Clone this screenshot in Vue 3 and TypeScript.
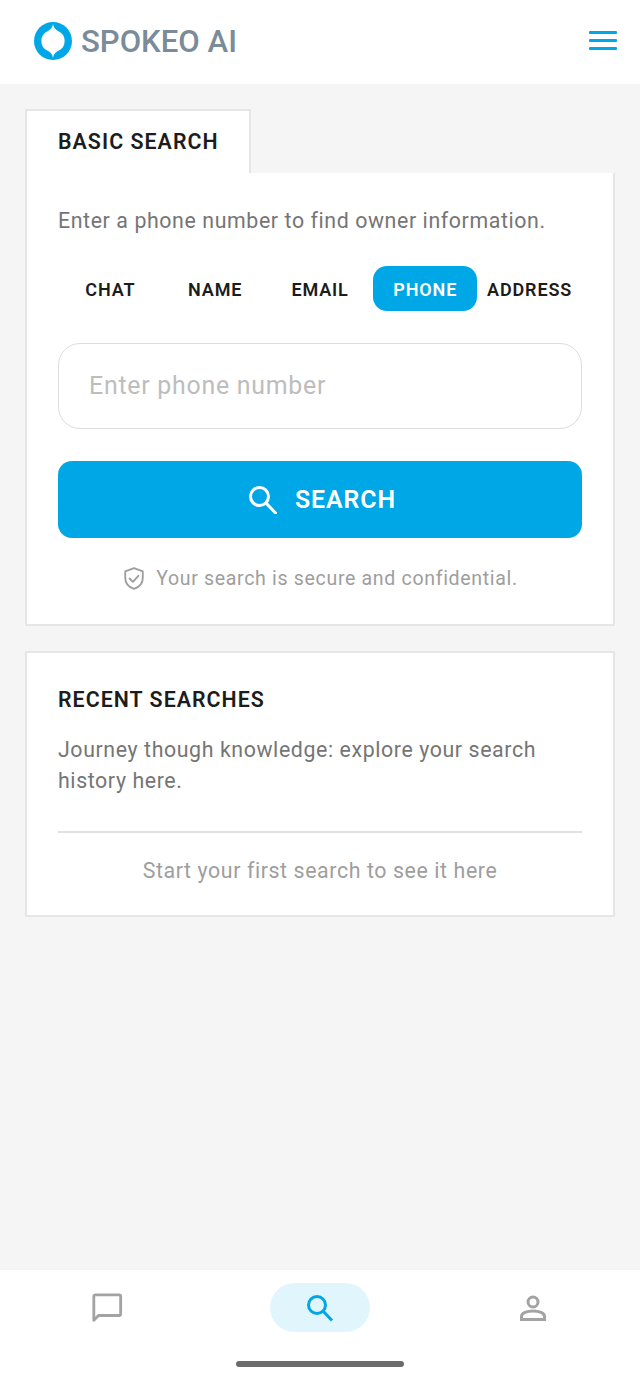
<script setup lang="ts">
const modes = ['CHAT', 'NAME', 'EMAIL', 'PHONE', 'ADDRESS']
const activeMode = 'PHONE'
</script>

<template>
  <div class="page">
    <header class="topbar">
      <div class="brand">
        <svg class="logo" viewBox="0 0 38 38" width="38" height="38">
          <circle cx="19" cy="19" r="19" fill="#00a7e7" />
          <path d="M19 2 C19.600 6 21.500 7.600 24 8.900 A11 11 0 0 1 24 29.100 C21.500 30.400 19.600 32 19 36 C18.400 32 16.500 30.400 14 29.100 A11 11 0 0 1 14 8.900 C16.500 7.600 18.400 6 19 2 Z" fill="#fff" />
        </svg>
        <span class="brand-name">SPOKEO AI</span>
      </div>
      <button class="menu" aria-label="Menu">
        <span></span><span></span><span></span>
      </button>
    </header>

    <main class="content">
      <div class="tab">BASIC SEARCH</div>
      <section class="card search-card">
        <p class="lead">Enter a phone number to find owner information.</p>
        <div class="modes">
          <button
            v-for="mode in modes"
            :key="mode"
            class="mode"
            :class="{ active: mode === activeMode }"
          >{{ mode }}</button>
        </div>
        <input class="phone-input" type="text" placeholder="Enter phone number" />
        <button class="search-btn">
          <svg viewBox="0 0 28 28" width="28" height="28" fill="none" stroke="#fff" stroke-width="3">
            <circle cx="10.500" cy="10.500" r="9" />
            <path d="M17 17 L26.500 27" stroke-linecap="round" />
          </svg>
          <span>SEARCH</span>
        </button>
        <div class="secure">
          <svg viewBox="3 1.500 18 21" width="20" height="23" fill="none" stroke="#9e9e9e" stroke-width="1.700">
            <path d="M12 2.500 L20 5.500 V11.500 C20 16.500 16.500 20 12 21.500 C7.500 20 4 16.500 4 11.500 V5.500 Z" stroke-linejoin="round" />
            <path d="M8 12 L11 15 L16 9.500" stroke-linecap="round" stroke-linejoin="round" />
          </svg>
          <span>Your search is secure and confidential.</span>
        </div>
      </section>

      <section class="card recent-card">
        <h2>RECENT SEARCHES</h2>
        <p class="lead">Journey though knowledge: explore your search history here.</p>
        <div class="empty">Start your first search to see it here</div>
      </section>
    </main>

    <nav class="bottom-nav">
      <div class="nav-items">
        <div class="nav-item">
          <svg viewBox="0 0 34 34" width="32" height="32" fill="none" stroke="#a3a3a3" stroke-width="3">
            <path d="M3 30 V4.500 C3 3.700 3.700 3 4.500 3 H30 C30.800 3 31.500 3.700 31.500 4.500 V23.500 C31.500 24.300 30.800 25 30 25 H8 Z" stroke-linejoin="round" />
          </svg>
        </div>
        <div class="nav-item current">
          <svg viewBox="0 0 30 30" width="30" height="30" fill="none" stroke="#00a7e7" stroke-width="3">
            <circle cx="12" cy="12" r="8.500" />
            <path d="M18 18 L27 27.500" />
          </svg>
        </div>
        <div class="nav-item">
          <svg viewBox="0 0 30 30" width="30" height="30" fill="none" stroke="#a3a3a3" stroke-width="3">
            <circle cx="15" cy="9" r="5" />
            <path d="M3.500 26.500 V23.500 C3.500 20 9 18 15 18 C21 18 26.500 20 26.500 23.500 V26.500 Z" />
          </svg>
        </div>
      </div>
      <div class="home-bar"></div>
    </nav>
  </div>
</template>

<style>
html,
body {
  margin: 0;
  background: #f5f5f5;
}
</style>

<style scoped>
.page {
  width: 640px;
  height: 1382px;
  display: flex;
  flex-direction: column;
  background: #f5f5f5;
  font-family: Roboto, "Liberation Sans", sans-serif;
  overflow: hidden;
}

.topbar {
  height: 84px;
  flex-shrink: 0;
  display: flex;
  align-items: center;
  justify-content: space-between;
  padding: 0 23px 3px 34px;
  box-sizing: border-box;
  background: #fff;
}

.brand {
  display: flex;
  align-items: center;
  gap: 9px;
}

.brand-name {
  padding-top: 2px;
  font-size: 31.110px;
  font-weight: 500;
  color: #7a8b99;
}

.menu {
  width: 28px;
  display: flex;
  flex-direction: column;
  gap: 5px;
  padding: 0;
  border: none;
  background: none;
}

.menu span {
  height: 3px;
  background: #00a7e7;
  border-radius: 1px;
}

.content {
  flex: 1;
  padding: 25px 25px 0;
}

.tab {
  width: 226px;
  height: 64px;
  box-sizing: border-box;
  padding-left: 31px;
  line-height: 62px;
  background: #fff;
  border: 2px solid #e6e6e6;
  border-bottom: none;
  font-size: 21.330px;
  font-weight: 600;
  letter-spacing: 1.050px;
  color: #1c1c1c;
}

.card {
  background: #fff;
  border: 2px solid #e6e6e6;
  padding: 0 31px;
}

.search-card {
  height: 453px;
  box-sizing: border-box;
  padding-top: 32px;
  border-top: none;
}

.lead {
  margin: 0;
  font-size: 21.330px;
  line-height: 31px;
  letter-spacing: 0.600px;
  color: #757575;
}

.modes {
  display: grid;
  grid-template-columns: repeat(5, 1fr);
  margin-top: 30px;
}

.mode {
  height: 45px;
  padding: 1px 0 0;
  border: none;
  border-radius: 14px;
  background: none;
  font-family: inherit;
  font-size: 18px;
  font-weight: 600;
  letter-spacing: 0.850px;
  color: #1c1c1c;
}

.mode.active {
  margin-left: 1px;
  background: #00a7e7;
  color: #fff;
}

.phone-input {
  display: block;
  width: 100%;
  height: 86px;
  margin-top: 32px;
  box-sizing: border-box;
  padding: 0 30px 2px;
  border: 1px solid #dcdcdc;
  border-radius: 22px;
  outline: none;
  font-family: inherit;
  font-size: 24.890px;
  letter-spacing: 0.750px;
}

.phone-input::placeholder {
  color: #bdbdbd;
  opacity: 1;
}

.search-btn {
  width: 100%;
  height: 77px;
  margin-top: 32px;
  display: flex;
  align-items: center;
  justify-content: center;
  gap: 18px;
  padding: 0 0 0 5px;
  border: none;
  border-radius: 14px;
  background: #00a7e7;
  color: #fff;
  font-family: inherit;
  font-size: 24.890px;
  font-weight: 600;
  letter-spacing: 0.930px;
}

.secure {
  margin-top: 29px;
  display: flex;
  align-items: center;
  justify-content: center;
  gap: 12px;
  padding-left: 2px;
  font-size: 19.560px;
  letter-spacing: 0.670px;
  color: #9e9e9e;
}

.recent-card {
  height: 266px;
  margin-top: 25px;
  box-sizing: border-box;
  padding-top: 34px;
}

.recent-card h2 {
  margin: 0 0 21px;
  font-size: 21.330px;
  line-height: 26px;
  font-weight: 600;
  letter-spacing: 1.050px;
  color: #1c1c1c;
}

.empty {
  margin-top: 35px;
  padding-top: 25px;
  border-top: 2px solid #e0e0e0;
  text-align: center;
  font-size: 21.330px;
  letter-spacing: 0.600px;
  color: #9e9e9e;
}

.bottom-nav {
  height: 112px;
  flex-shrink: 0;
  background: #fff;
}

.nav-items {
  display: grid;
  grid-template-columns: repeat(3, 1fr);
  justify-items: center;
  padding: 13px 0 0;
}

.nav-item {
  width: 100px;
  height: 49px;
  display: flex;
  align-items: center;
  justify-content: center;
  border-radius: 25px;
}

.nav-item.current {
  background: #e1f5fd;
}

.home-bar {
  width: 168px;
  height: 6px;
  margin: 29px auto 0;
  border-radius: 3px;
  background: #6b6b6b;
}
</style>
